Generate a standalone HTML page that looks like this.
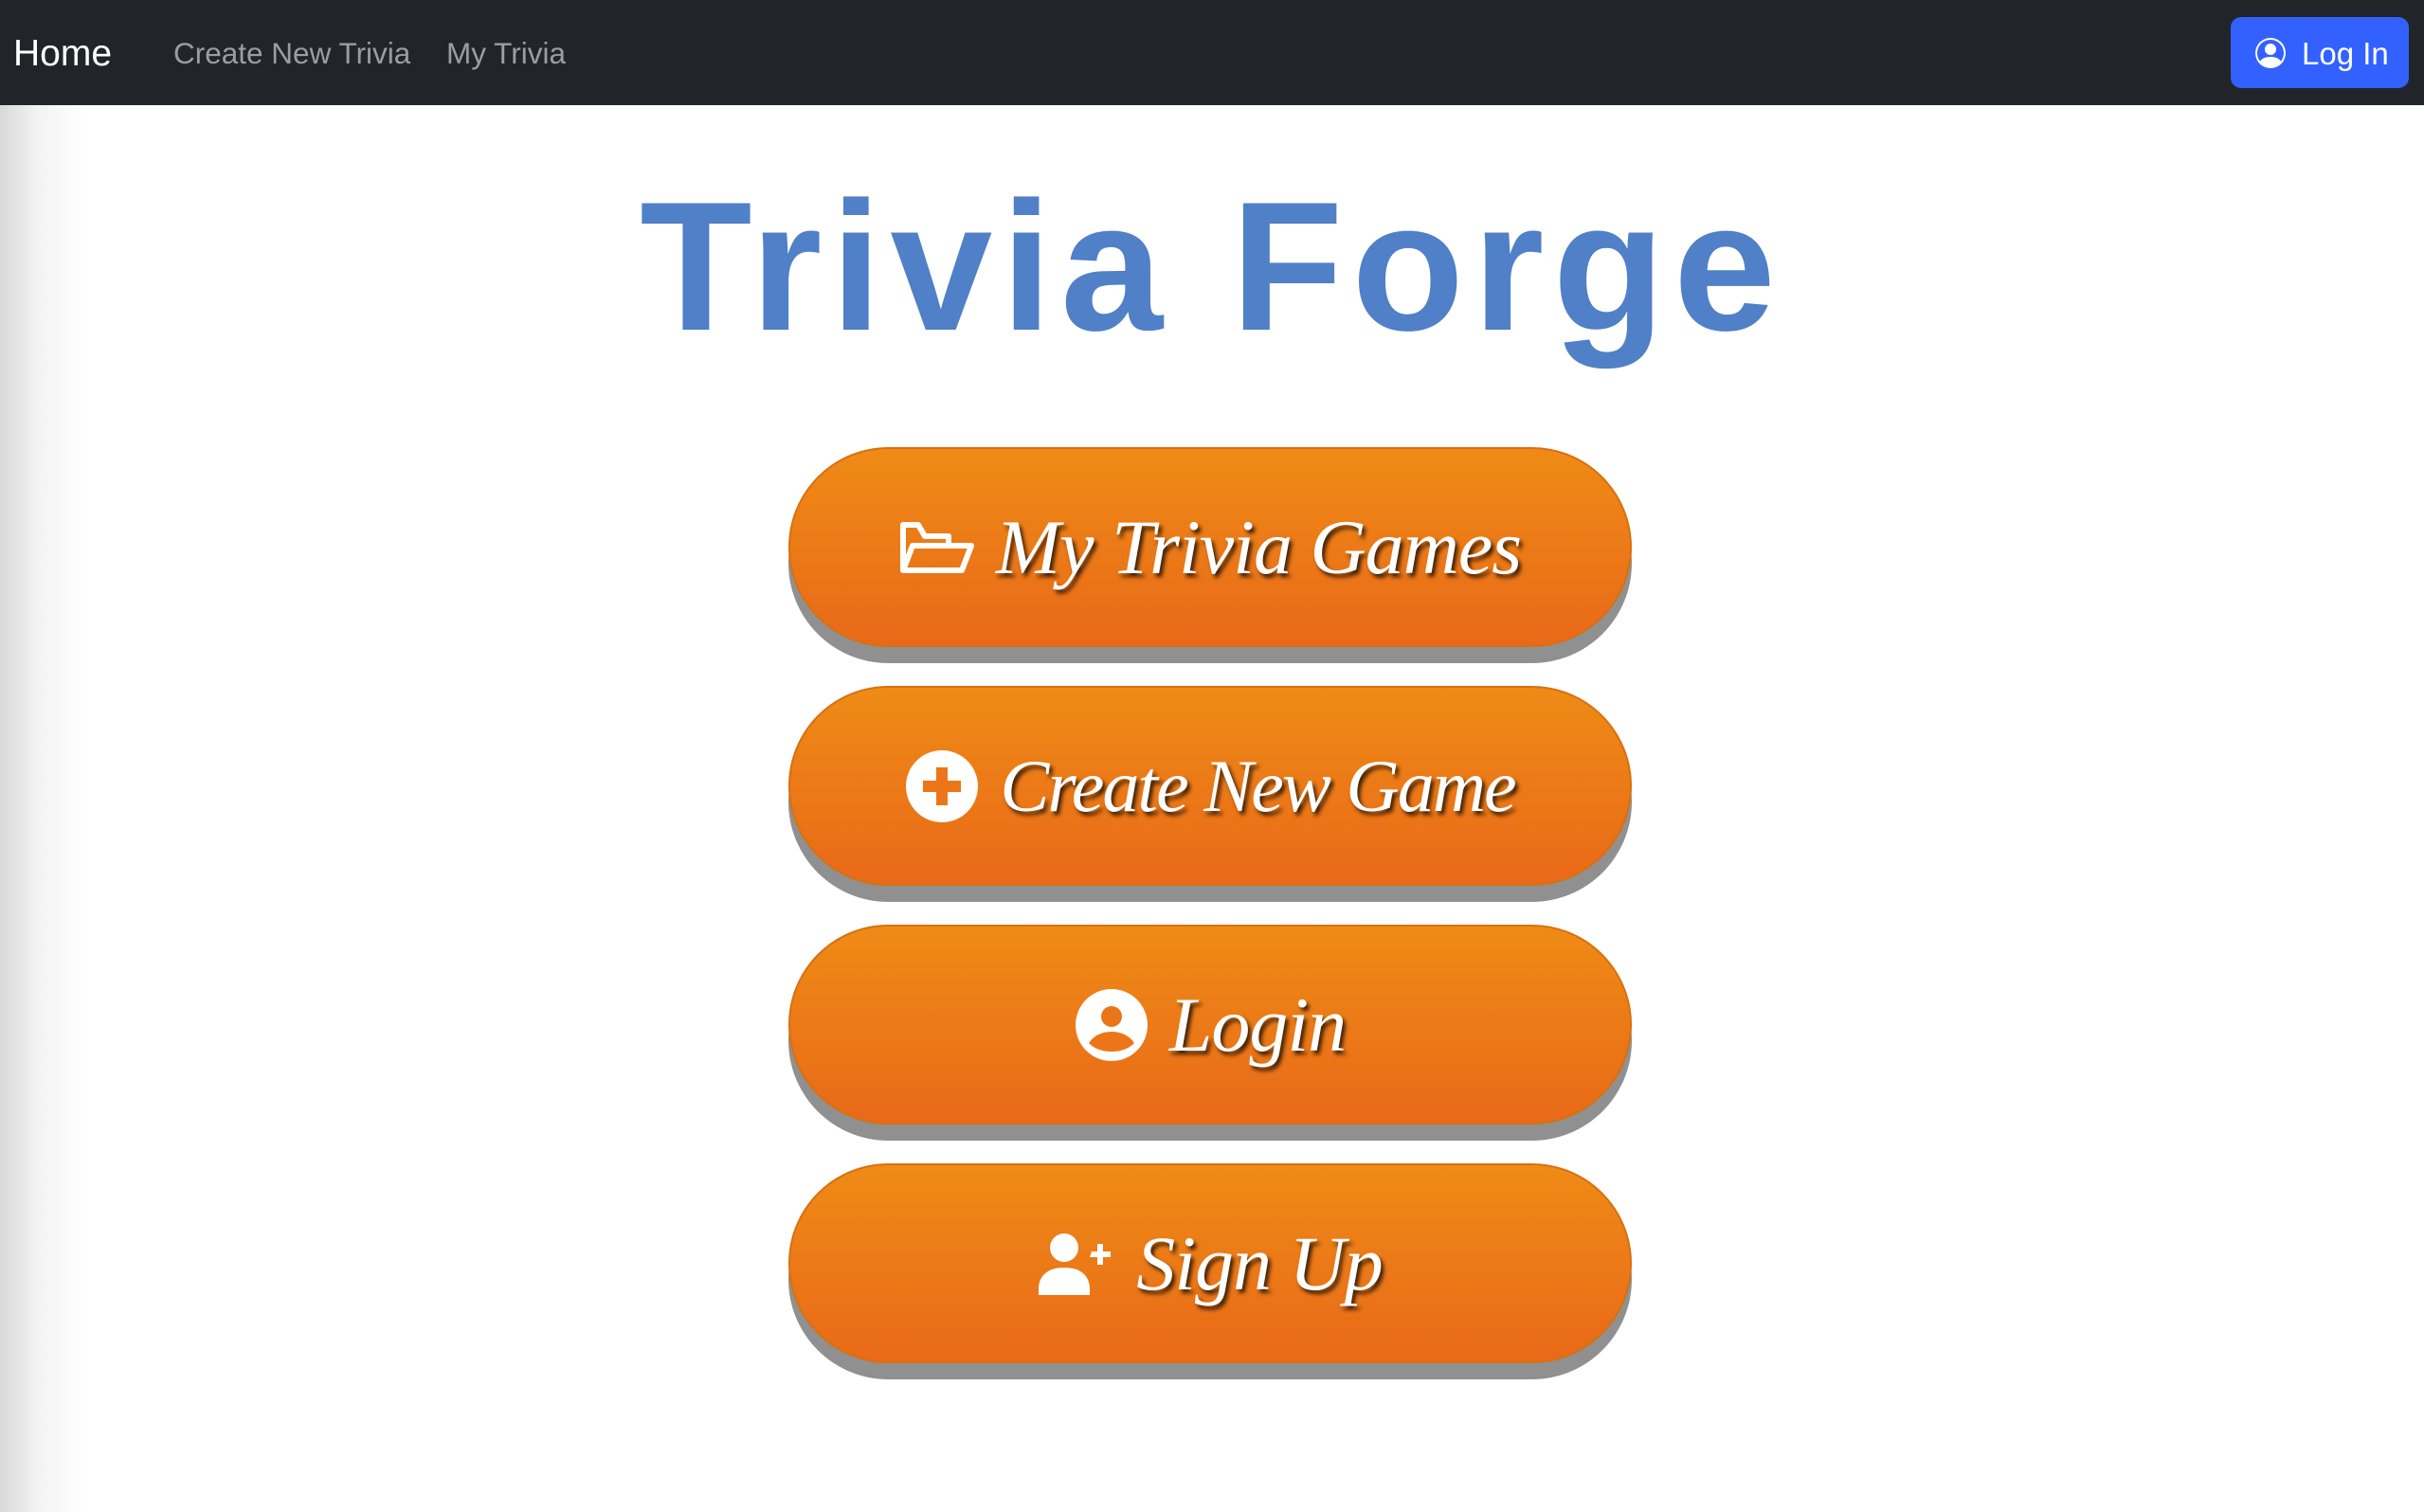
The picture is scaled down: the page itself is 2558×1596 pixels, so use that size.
<!DOCTYPE html>
<html><head><meta charset="utf-8"><style>
html,body{margin:0;padding:0;width:2558px;height:1596px;overflow:hidden;background:#fff;font-family:"Liberation Sans",sans-serif;}
body{background:linear-gradient(90deg,#d9d9d9 0,#f3f3f3 40px,#fff 90px);}
.nav{position:absolute;left:0;top:0;width:2558px;height:111px;background:#212529;}
.nav span{position:absolute;top:0;line-height:113px;white-space:nowrap;}
.home{left:14px;font-size:39px;color:#fff;}
.l1{left:183px;font-size:31.5px;color:#9a9da1;}
.l2{left:471px;font-size:31.5px;color:#9a9da1;}
.login{position:absolute;left:2354px;top:18px;width:188px;height:75px;background:#3361ff;border-radius:11px;color:#fff;font-size:33px;}
.login svg{position:absolute;left:26px;top:22px;}
.login b{position:absolute;left:75px;top:0;line-height:77px;font-weight:normal;}
.title{position:absolute;left:0;width:2558px;top:162px;text-align:center;font-size:194px;font-weight:bold;color:#5080c7;line-height:240px;letter-spacing:9px;}
.btn{position:absolute;left:832px;width:890px;height:211px;}
.btn .sh{position:absolute;left:0;top:17px;width:890px;height:211px;border-radius:106px;background:#909090;}
.btn .fg{position:absolute;left:0;top:0;width:886px;height:207px;border-radius:106px;border:2px solid #d8700e;background:linear-gradient(#ef8b16,#e96918);}
.btn .c{position:absolute;left:0;top:0;width:890px;height:211px;display:flex;align-items:center;justify-content:center;}
.btn .t{font-family:"Liberation Serif",serif;font-style:italic;font-size:82px;color:#fff;text-shadow:3px 4px 4px rgba(0,0,0,.75);margin-left:22px;letter-spacing:-1px;}
</style></head><body>
<div class="nav">
<span class="home">Home</span><span class="l1">Create New Trivia</span><span class="l2">My Trivia</span>
<div class="login"><svg width="32" height="32" viewBox="0 0 16 16" fill="#fff"><path d="M11 6a3 3 0 1 1-6 0 3 3 0 0 1 6 0"/><path fill-rule="evenodd" d="M0 8a8 8 0 1 1 16 0A8 8 0 0 1 0 8m8-7a7 7 0 0 0-5.468 11.370C3.242 11.226 4.805 10 8 10s4.757 1.225 5.468 2.37A7 7 0 0 0 8 1"/></svg><b>Log In</b></div>
</div>
<div class="title">Trivia Forge</div>

<div class="btn" style="top:472px"><div class="sh"></div><div class="fg"></div><div class="c">
<svg width="80" height="56" viewBox="0 0 80 56" fill="none" stroke="#fff" stroke-width="6" stroke-linejoin="round"><path d="M4 52V4h16l7 12h25v12"/><path d="M4 52l10-26h62l-10 26z"/></svg>
<span class="t">My Trivia Games</span></div></div>

<div class="btn" style="top:724px"><div class="sh"></div><div class="fg"></div><div class="c">
<svg width="78" height="78" viewBox="0 0 78 78"><circle cx="39" cy="39" r="38" fill="#fff"/><path d="M33 19h12v14h14v12H45v14H33V45H19V33h14z" fill="#ec7617"/></svg>
<span class="t" style="font-size:78px;letter-spacing:-2px">Create New Game</span></div></div>

<div class="btn" style="top:976px"><div class="sh"></div><div class="fg"></div><div class="c">
<svg width="78" height="78" viewBox="0 0 78 78"><circle cx="39" cy="39" r="38" fill="#fff"/><path d="M15 58c5-8 14-12 24-12s19 4 24 12c-6 6-14 9-24 9s-18-3-24-9z" fill="#ec7617"/><circle cx="39" cy="30" r="11" fill="#ec7617"/></svg>
<span class="t">Login</span></div></div>

<div class="btn" style="top:1228px"><div class="sh"></div><div class="fg"></div><div class="c">
<svg width="82" height="66" viewBox="0 0 82 66" fill="#fff"><circle cx="28" cy="16" r="15"/><path d="M1 60c0-14 9-23 27-23s27 9 27 23v6H1z"/><path d="M57 20h6v-8h6v8h8v6h-8v8h-6v-8h-8z"/></svg>
<span class="t">Sign Up</span></div></div>
</body></html>
